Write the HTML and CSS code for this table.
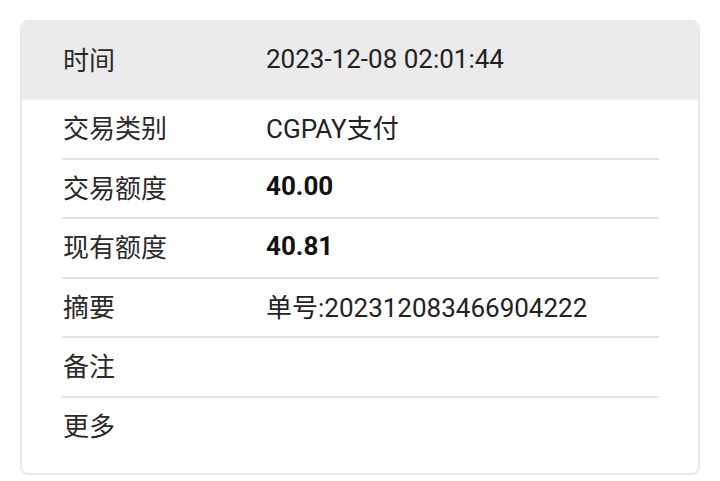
FILE: index.html
```html
<!DOCTYPE html>
<html lang="zh-CN">
<head>
<meta charset="utf-8">
<link rel="stylesheet" href="styles.css">
</head>
<body>
<div class="card">
  <div class="head">
    <div class="label">时间</div>
    <div class="value">2023-12-08 02:01:44</div>
  </div>
  <div class="body">
    <div class="row"><div class="label">交易类别</div><div class="value">CGPAY支付</div></div>
    <div class="row"><div class="label">交易额度</div><div class="value bold">40.00</div></div>
    <div class="row"><div class="label">现有额度</div><div class="value bold">40.81</div></div>
    <div class="row"><div class="label">摘要</div><div class="value">单号:202312083466904222</div></div>
    <div class="row"><div class="label">备注</div><div class="value"></div></div>
    <div class="row"><div class="label">更多</div><div class="value"></div></div>
  </div>
</div>
</body>
</html>
```
FILE: styles.css
```css
html, body { margin: 0; padding: 0; background: #fff; }
body {
  font-family: Roboto, "Noto Sans CJK SC", sans-serif;
  color: #222;
  font-size: 26px;
  padding: 20px 20px 0 20px;
}
.card {
  width: 680px;
  height: 455px;
  box-sizing: border-box;
  border: 2px solid #e8e8e8;
  border-radius: 8px;
  overflow: hidden;
}
.head {
  display: grid;
  grid-template-columns: 204px 1fr;
  align-items: center;
  height: 77px;
  padding: 0 40px;
  background: #ebebeb;
  border-bottom: 1px solid #f2f2f2;
}
.body { padding: 0 39px 0 40px; }
.row {
  display: grid;
  grid-template-columns: 204px 1fr;
  align-items: center;
  height: 57.5px;
  border-bottom: 2px solid #e4e4e4;
}
.row:last-child { border-bottom: none; }
.label, .value { padding-bottom: 4px; }
.label { padding-left: 1px; color: #2a2a2a; }
.value { color: #222; }
.bold { font-weight: 700; color: #111; }
```
